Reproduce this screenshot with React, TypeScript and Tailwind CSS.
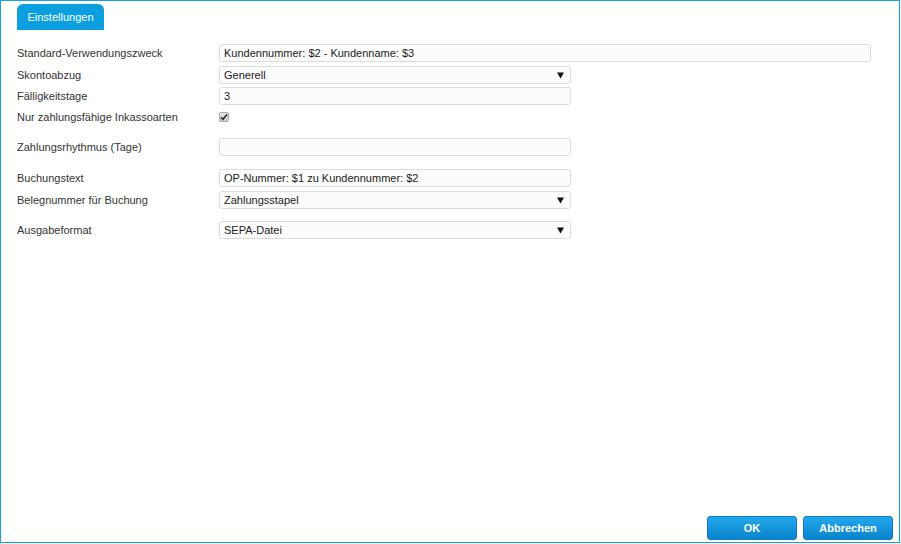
import React from "react";

const font = { fontFamily: '"Liberation Sans", Arial, sans-serif' };

function TextInput({ value, wide }: { value: string; wide?: boolean }) {
  return (
    <div
      className={`h-[18px] ${wide ? "w-[652px]" : "w-[352px]"} flex items-center rounded-[3px] border border-[#dcdcdc] bg-[#fcfcfc] pl-[4px] text-[11px] text-[#222]`}
    >
      {value}
    </div>
  );
}

function Select({ value }: { value: string }) {
  return (
    <div className="h-[18px] w-[352px] flex items-center justify-between rounded-[3px] border border-[#dcdcdc] bg-[#fcfcfc] pl-[4px] pr-[6px] text-[11px] text-[#222]">
      <span>{value}</span>
      <svg width="7" height="7" viewBox="0 0 7 7">
        <polygon points="0,0.5 7,0.5 3.5,6.5" fill="#111" />
      </svg>
    </div>
  );
}

function Row({ label, children, mt }: { label: string; children: React.ReactNode; mt: string }) {
  return (
    <div className={`flex items-center h-[18px] ${mt}`}>
      <div className="w-[202px] text-[11px] text-[#333]">{label}</div>
      {children}
    </div>
  );
}

export default function App() {
  return (
    <div className="w-[901px] h-[544px] bg-white" style={font}>
      <div className="w-[900px] h-[543px] border border-[#1a9fe0] flex flex-col">
        <div className="pl-[16px] pt-[3px]">
          <div className="w-[87px] h-[26px] rounded-t-[6px] bg-[#0c9fe0] flex items-center justify-center text-[11px] text-white">
            Einstellungen
          </div>
        </div>
        <div className="pl-[16px]">
          <Row label="Standard-Verwendungszweck" mt="mt-[14px]">
            <TextInput value="Kundennummer: $2 - Kundenname: $3" wide />
          </Row>
          <Row label="Skontoabzug" mt="mt-[4px]">
            <Select value="Generell" />
          </Row>
          <Row label="Fälligkeitstage" mt="mt-[3px]">
            <TextInput value="3" />
          </Row>
          <Row label="Nur zahlungsfähige Inkassoarten" mt="mt-[3px]">
            <div className="w-[10px] h-[10px] rounded-[2px] border border-[#a9a9a9] bg-gradient-to-b from-[#e6e6e6] to-[#cfcfcf] flex items-center justify-center">
              <svg width="8" height="8" viewBox="0 0 8 8">
                <path d="M1 4.3 L3 6.3 L7 1.5" stroke="#2a2a2a" strokeWidth="1.6" fill="none" />
              </svg>
            </div>
          </Row>
          <Row label="Zahlungsrhythmus (Tage)" mt="mt-[12px]">
            <TextInput value="" />
          </Row>
          <Row label="Buchungstext" mt="mt-[13px]">
            <TextInput value="OP-Nummer: $1 zu Kundennummer: $2" />
          </Row>
          <Row label="Belegnummer für Buchung" mt="mt-[4px]">
            <Select value="Zahlungsstapel" />
          </Row>
          <Row label="Ausgabeformat" mt="mt-[12px]">
            <Select value="SEPA-Datei" />
          </Row>
        </div>
        <div className="flex-1" />
        <div className="flex justify-end gap-[6px] pr-[6px] pb-[2px]">
          <button className="w-[90px] h-[24px] rounded-[3px] border border-[#0a80c6] bg-gradient-to-b from-[#22a8ec] to-[#0a84cc] text-[11px] font-bold text-white">
            OK
          </button>
          <button className="w-[90px] h-[24px] rounded-[3px] border border-[#0a80c6] bg-gradient-to-b from-[#22a8ec] to-[#0a84cc] text-[11px] font-bold text-white">
            Abbrechen
          </button>
        </div>
      </div>
    </div>
  );
}
